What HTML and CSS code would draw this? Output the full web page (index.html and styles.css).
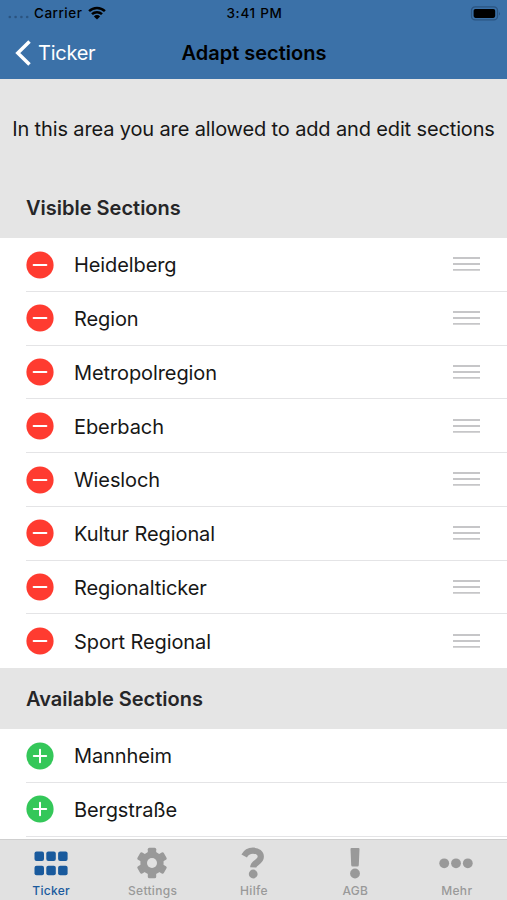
FILE: index.html
```html
<!DOCTYPE html>
<html lang="en">
<head>
<meta charset="utf-8">
<title>Adapt sections</title>
<link rel="stylesheet" href="styles.css">
</head>
<body>
<svg class="defs" aria-hidden="true">
  <symbol id="minus" viewBox="0 0 28 28"><circle cx="14" cy="14" r="13.6" fill="#ff3b30"/><path d="M7.6 14h12.800" stroke="#fff" stroke-width="2" stroke-linecap="round"/></symbol>
  <symbol id="plus" viewBox="0 0 28 28"><circle cx="14" cy="14" r="13.6" fill="#34c759"/><path d="M7.8 14h12.400M14 7.800v12.400" stroke="#fff" stroke-width="2" stroke-linecap="round"/></symbol>
  <symbol id="grip" viewBox="0 0 27 16"><path d="M0 2h27M0 8h27M0 13.8h27" stroke="#c6c6c8" stroke-width="1.8"/></symbol>
</svg>
<div class="screen">
  <header class="top">
    <div class="status">
      <div class="carrier">
        <svg class="signal" width="21" height="4" viewBox="0 0 21 4" fill="#2b5480"><circle cx="1.8" cy="2" r="1.3"/><circle cx="7.6" cy="2" r="1.3"/><circle cx="13.4" cy="2" r="1.3"/><circle cx="19.2" cy="2" r="1.3"/></svg>
        <span class="carrier-name">Carrier</span>
        <svg width="18" height="14" viewBox="0 0 18 14"><path d="M1.1 5.2a11.3 11.3 0 0 1 15.8 0M4 8.2a7.2 7.2 0 0 1 10 0" fill="none" stroke="#000" stroke-width="2.5"/><path d="M9 13.6 5.9 10.4a4.4 4.4 0 0 1 6.2 0z"/></svg>
      </div>
      <time class="clock">3:41 PM</time>
      <svg class="battery" width="31" height="15" viewBox="0 0 31 15"><rect x="1.500" y=".8" width="26" height="13" rx="3.6" fill="none" stroke="#2b5480" stroke-width="1.3"/><rect x="3.600" y="2.9" width="21.600" height="9" rx="1.8"/><path d="M29 5.5v4q1.7-2 0-4z" fill="#2b5480"/></svg>
    </div>
    <nav class="bar">
      <a class="back"><svg width="18" height="28" viewBox="0 0 18 28"><path d="M15.500 2.500 3.800 14l11.700 11.500" fill="none" stroke="#fff" stroke-width="3.500"/></svg><span>Ticker</span></a>
      <h1>Adapt sections</h1>
    </nav>
  </header>
  <main>
    <p class="intro">In this area you are allowed to add and edit sections</p>
    <h2 class="visible">Visible Sections</h2>
    <ul>
      <li><svg class="dot"><use href="#minus"/></svg><div class="cell"><span>Heidelberg</span><svg class="grip"><use href="#grip"/></svg></div></li>
      <li><svg class="dot"><use href="#minus"/></svg><div class="cell"><span>Region</span><svg class="grip"><use href="#grip"/></svg></div></li>
      <li><svg class="dot"><use href="#minus"/></svg><div class="cell"><span>Metropolregion</span><svg class="grip"><use href="#grip"/></svg></div></li>
      <li><svg class="dot"><use href="#minus"/></svg><div class="cell"><span>Eberbach</span><svg class="grip"><use href="#grip"/></svg></div></li>
      <li><svg class="dot"><use href="#minus"/></svg><div class="cell"><span>Wiesloch</span><svg class="grip"><use href="#grip"/></svg></div></li>
      <li><svg class="dot"><use href="#minus"/></svg><div class="cell"><span>Kultur Regional</span><svg class="grip"><use href="#grip"/></svg></div></li>
      <li><svg class="dot"><use href="#minus"/></svg><div class="cell"><span>Regionalticker</span><svg class="grip"><use href="#grip"/></svg></div></li>
      <li class="last"><svg class="dot"><use href="#minus"/></svg><div class="cell"><span>Sport Regional</span><svg class="grip"><use href="#grip"/></svg></div></li>
    </ul>
    <h2 class="available">Available Sections</h2>
    <ul>
      <li><svg class="dot"><use href="#plus"/></svg><div class="cell"><span>Mannheim</span></div></li>
      <li><svg class="dot"><use href="#plus"/></svg><div class="cell"><span>Bergstraße</span></div></li>
    </ul>
  </main>
  <footer class="tabs">
    <a class="tab active"><svg width="34" height="32" viewBox="0 0 34 32"><rect x=".5" y="4.5" width="9.5" height="9.5" rx="2"/><rect x="12.3" y="4.5" width="9.5" height="9.5" rx="2"/><rect x="24.1" y="4.5" width="9.5" height="9.5" rx="2"/><rect x=".5" y="18.7" width="9.5" height="9.5" rx="2"/><rect x="12.3" y="18.7" width="9.5" height="9.5" rx="2"/><rect x="24.1" y="18.7" width="9.5" height="9.5" rx="2"/></svg><span>Ticker</span></a>
    <a class="tab"><svg width="32" height="32" viewBox="0 0 32 32"><g class="teeth"><rect id="tooth" x="11.800" y=".8" width="8.400" height="30.400" rx="1.500"/><use href="#tooth" transform="rotate(60 16 16)"/><use href="#tooth" transform="rotate(120 16 16)"/></g><circle cx="16" cy="16" r="8.300" fill="none" stroke="#999" stroke-width="6.600"/><circle cx="16" cy="16" r="5" fill="#e1e1e1"/></svg><span>Settings</span></a>
    <a class="tab"><svg width="24" height="32" viewBox="0 0 24 32"><path d="M3.200 9C5 5.500 8 3.700 12 3.700c4.900 0 7.800 2.500 7.800 6.100 0 5.600-7.400 5.400-7.600 10.600" fill="none" stroke="#999" stroke-width="6.200"/><circle cx="12.200" cy="27" r="4.400"/></svg><span>Hilfe</span></a>
    <a class="tab"><svg width="12" height="32" viewBox="0 0 12 32"><path d="M2.500 1h7q1 0 1 1l-.7 16q0 1.500-1.500 1.500H3.700q-1.500 0-1.500-1.500L1.500 2q0-1 1-1z"/><circle cx="6" cy="26.500" r="4.900"/></svg><span>AGB</span></a>
    <a class="tab"><svg width="34" height="32" viewBox="0 0 34 32"><circle cx="5.200" cy="16.300" r="4.900"/><circle cx="17" cy="16.300" r="4.900"/><circle cx="28.800" cy="16.300" r="4.900"/></svg><span>Mehr</span></a>
  </footer>
</div>
</body>
</html>
```
FILE: styles.css
```css
* { box-sizing: border-box; }
body { margin: 0; font-family: Inter, "Liberation Sans", sans-serif; color: #171717; }
svg { display: block; flex: none; }
.defs { position: absolute; width: 0; height: 0; }
h1, h2, p, ul { margin: 0; padding: 0; }
.screen { width: 507px; height: 900px; display: flex; flex-direction: column; overflow: hidden; background: #fff; }
.top { flex: none; height: 79px; background: #3b71a8; color: #000; }
.status { height: 26px; padding: 0 6px 0 8px; display: grid; grid-template-columns: 1fr auto 1fr; align-items: center; font-size: 13.5px; font-weight: 500; }
.carrier { display: flex; align-items: center; }
.signal { margin-top: 7px; }
.carrier-name { margin: 0 6px 0 5px; letter-spacing: .5px; }
.clock { letter-spacing: .7px; }
.battery { justify-self: end; }
.bar { height: 53px; padding-left: 14px; display: grid; grid-template-columns: 1fr auto 1fr; align-items: center; padding-right: 13px; }
.back { display: flex; align-items: center; gap: 6px; color: #fff; font-size: 20px; letter-spacing: -.25px; }
.bar h1 { font-size: 20px; font-weight: 600; line-height: 24px; }
main { flex: 1; min-height: 0; overflow: hidden; background: #fff; }
.intro { height: 99px; background: #e5e5e5; text-align: center; font-size: 20px; line-height: 100px; letter-spacing: -.14px; white-space: nowrap; }
h2 { padding-left: 26px; background: #e5e5e5; font-size: 20px; font-weight: 600; color: #262628; }
.visible { height: 60px; line-height: 61px; }
.available { height: 61px; line-height: 62px; }
ul { list-style: none; font-size: 20px; letter-spacing: -.1px; }
li { height: 53.75px; padding-left: 26px; display: flex; background: linear-gradient(#e4e4e6, #e4e4e6) 26px 100% / 100% 1px no-repeat; }
li.last { background: none; }
.dot { width: 28px; height: 28px; margin-top: 12.6px; }
.cell { flex: 1; padding: 1px 27px 0 20px; display: flex; align-items: center; justify-content: space-between; }
.grip { width: 27px; height: 16px; margin-bottom: 2px; }
.tabs { flex: none; height: 61px; border-top: 1px solid #cfcfcf; background: #e1e1e1; display: grid; grid-template-columns: repeat(5, 1fr); }
.tab { display: flex; flex-direction: column; align-items: center; justify-content: space-between; height: 60px; color: #999; fill: #999; font-size: 12px; font-weight: 500; }
.tab svg { height: 32px; margin-top: 7px; }
.tab span { padding-left: 1px; line-height: 18px; letter-spacing: .3px; }
.active { color: #195a9d; fill: #195a9d; }
```
